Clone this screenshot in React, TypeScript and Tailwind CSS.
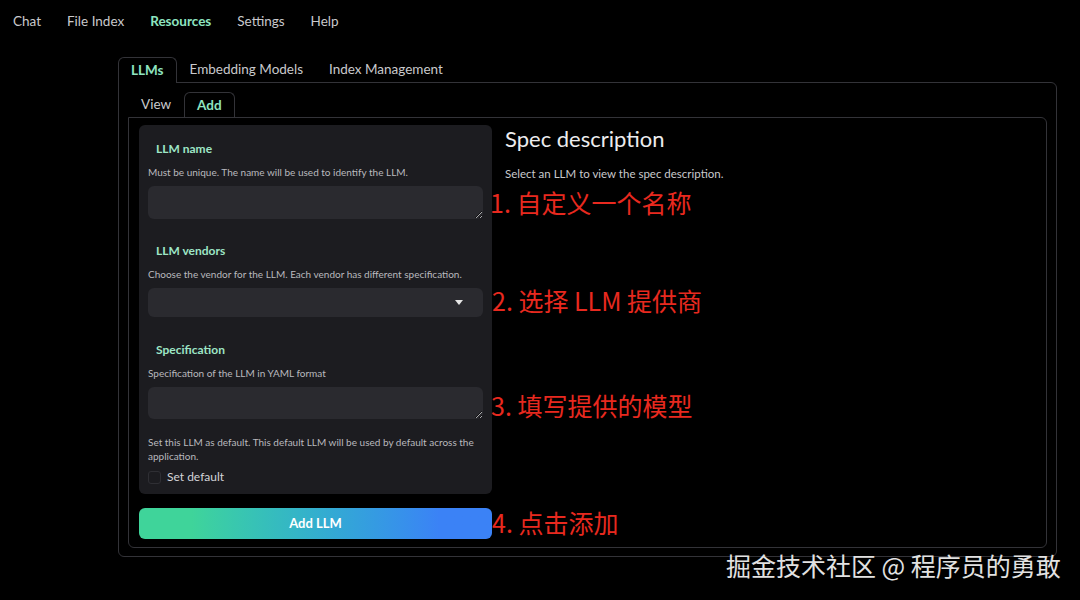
const ui = { fontFamily: "Lato, 'Open Sans', sans-serif" };
const cjk = { fontFamily: "'Noto Sans CJK SC', 'Noto Sans', sans-serif" };

function Field({
  label,
  desc,
  children,
  gap,
}: {
  label: string;
  desc: string;
  children: React.ReactNode;
  gap: string;
}) {
  return (
    <div className={gap}>
      <div className="pl-2 text-[12px] leading-[14px] font-bold text-[#9ee6c6]">{label}</div>
      <p className="mt-[10px] text-[10px] leading-[12px] text-[#b9b9be]">{desc}</p>
      <div className="mt-[8px]">{children}</div>
    </div>
  );
}

export default function App() {
  return (
    <main className="relative min-h-[600px] w-full bg-black text-white" style={ui}>
      {/* top nav */}
      <nav className="flex h-[42px] items-center gap-[26px] pl-[13px] text-[13.5px] text-[#c9c9cc]">
        <span>Chat</span>
        <span>File Index</span>
        <span className="font-bold text-[#8ee4c0]">Resources</span>
        <span>Settings</span>
        <span>Help</span>
      </nav>

      <div className="ml-[118px] mt-[15px] w-[939px]">
        {/* main tabs */}
        <div className="flex text-[13.5px] leading-[25px]">
          <div className="-mb-px rounded-t-md border border-b-0 border-[#333338] bg-black px-[12px] font-bold text-[#8ee4c0]">
            LLMs
          </div>
          <div className="px-[13px] text-[#c9c9cc]">Embedding Models</div>
          <div className="px-[13px] text-[#c9c9cc]">Index Management</div>
        </div>

        <div className="rounded-b-md rounded-tr-md border border-[#333338] px-[9px] pt-[9px] pb-[8px]">
          {/* sub tabs */}
          <div className="flex text-[13.5px] leading-[25px]">
            <div className="px-[13px] text-[#c9c9cc]">View</div>
            <div className="-mb-px rounded-t-md border border-b-0 border-[#333338] bg-black px-[12px] font-bold text-[#8ee4c0]">
              Add
            </div>
          </div>

          <div className="relative flex gap-[13px] rounded-b-md rounded-tr-md border border-[#333338] px-[10px] pt-[7px] pb-[8px]">
            {/* form column */}
            <div className="flex w-[353px] flex-col gap-[14px]">
              <div className="rounded-md bg-[#1c1c20] px-[9px] pt-[17px] pb-[10px]">
                <Field gap="" label="LLM name" desc="Must be unique. The name will be used to identify the LLM.">
                  <textarea className="block h-[33px] w-full resize-y rounded-md bg-[#2a2a2f] outline-none" />
                </Field>
                <Field
                  gap="mt-[25px]"
                  label="LLM vendors"
                  desc="Choose the vendor for the LLM. Each vendor has different specification."
                >
                  <div className="flex h-[29px] items-center justify-end rounded-md bg-[#2a2a2f] pr-[20px]">
                    <svg width="8" height="5" viewBox="0 0 8 5">
                      <path d="M0 0 L8 0 L4 5 Z" fill="#e5e5e5" />
                    </svg>
                  </div>
                </Field>
                <Field gap="mt-[26px]" label="Specification" desc="Specification of the LLM in YAML format">
                  <textarea className="block h-[32px] w-full resize-y rounded-md bg-[#2a2a2f] outline-none" />
                </Field>
                <p className="mt-[16px] text-[10px] leading-[14px] text-[#b9b9be]">
                  Set this LLM as default. This default LLM will be used by default across the application.
                </p>
                <label className="mt-[7px] flex items-center gap-[6px] text-[12px] leading-[14px] text-[#d4d4d8]">
                  <span className="h-[13px] w-[13px] rounded-[3px] border border-[#2f2f34] bg-[#1c1c20]" />
                  Set default
                </label>
              </div>
              <button className="h-[31px] w-full rounded-md bg-linear-to-r from-[#3fd49a] from-15% to-[#3b82f6] to-85% text-[13px] font-bold text-white">
                Add LLM
              </button>
            </div>

            {/* spec column */}
            <div className="pt-px">
              <h2 className="text-[22px] leading-[26px] text-[#ececee]">Spec description</h2>
              <p className="mt-[15px] text-[11.5px] leading-[14px] text-[#c9c9cc]">
                Select an LLM to view the spec description.
              </p>
            </div>

            {/* red annotations laid over the screenshot */}
            <div className="pointer-events-none absolute top-[68px] left-[361px] text-[25px] leading-[32px] text-[#e8291f]" style={cjk}>
              1. 自定义一个名称
            </div>
            <div className="pointer-events-none absolute top-[166px] left-[363px] text-[25px] leading-[32px] text-[#e8291f]" style={cjk}>
              2. 选择 LLM 提供商
            </div>
            <div className="pointer-events-none absolute top-[271px] left-[362px] text-[25px] leading-[32px] text-[#e8291f]" style={cjk}>
              3. 填写提供的模型
            </div>
            <div className="pointer-events-none absolute top-[388px] left-[363px] text-[25px] leading-[32px] text-[#e8291f]" style={cjk}>
              4. 点击添加
            </div>
          </div>
        </div>
      </div>

      {/* watermark */}
      <div
        className="pointer-events-none absolute top-[549px] left-[726px] text-[25px] leading-[32px] text-[#e2e2e2]"
        style={cjk}
      >
        掘金技术社区 @ 程序员的勇敢
      </div>
    </main>
  );
}
